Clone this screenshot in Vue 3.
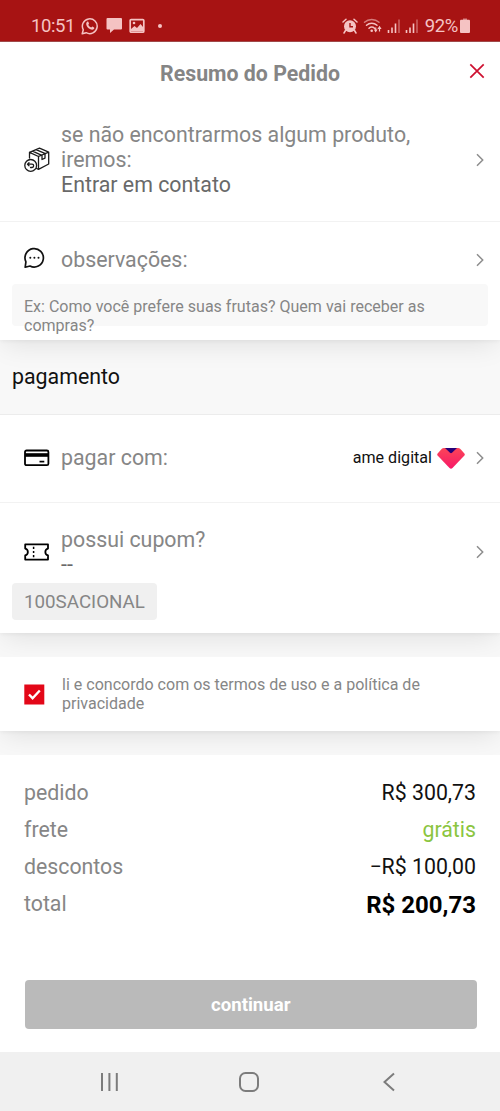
<script setup>
const totals = [
  { label: 'pedido', value: 'R$ 300,73', kind: 'plain' },
  { label: 'frete', value: 'grátis', kind: 'free' },
  { label: 'descontos', value: '−R$ 100,00', kind: 'discount' },
  { label: 'total', value: 'R$ 200,73', kind: 'grand' },
]
</script>

<template>
  <div class="screen">
    <div class="status">
      <span class="clock">10:51</span>
      <svg class="whats" width="18" height="18" viewBox="0 0 18 18">
        <path d="M1.2 16.8 2.3 12.8A7.4 7.4 0 1 1 5.2 15.7Z" fill="none" stroke="currentColor" stroke-width="1.5" stroke-linejoin="round" />
        <path d="M6.2 4.8c.5-.4 1-.3 1.2.2l.6 1.4c.1.4-.6 1-.7 1.3.6 1.3 1.6 2.2 2.9 2.8.4-.1.9-1 1.3-.9l1.5.8c.5.3.3 1.1-.1 1.6-1 1-2.4.8-4 0C7 11 5.7 9.4 5.3 7.7 5 6.5 5.5 5.3 6.2 4.8Z" fill="currentColor" />
      </svg>
      <svg class="bubble" width="17" height="17" viewBox="0 0 17 17">
        <path d="M1.5 1h13.500a1 1 0 0 1 1 1v9.500a1 1 0 0 1-1 1H8L4 16v-3.500H1.500a1 1 0 0 1-1-1V2a1 1 0 0 1 1-1Z" fill="currentColor" />
      </svg>
      <svg class="photo" width="16" height="16" viewBox="0 0 16 16">
        <rect x="1.2" y="1.6" width="13.6" height="12.6" rx="1" fill="none" stroke="currentColor" stroke-width="1.7" />
        <path d="M2 13V11l3.500-3 2.500 2 3.500-4L14 9v4Z" fill="currentColor" />
        <circle cx="5" cy="5" r="1.3" fill="currentColor" />
      </svg>
      <i class="dot"></i>
      <span class="grow"></span>
      <svg class="alarm" width="16" height="16" viewBox="0 0 16 16">
        <path d="M1 4 4 1.300M15 4 12 1.300M3.500 12.500 2 15M12.500 12.500 14 15" stroke="currentColor" stroke-width="1.5" stroke-linecap="round" />
        <circle cx="8" cy="8.2" r="6" fill="currentColor" />
        <path d="M8 5v3.700h3" fill="none" stroke="#a71313" stroke-width="1.4" />
      </svg>
      <svg class="wifi" width="20" height="16" viewBox="0 0 20 16">
        <g fill="none" stroke="currentColor" stroke-width="1.5" stroke-linecap="round">
          <path d="M1.500 4.200C5.500.6 12 .6 16 4.200" opacity=".6" />
          <path d="M3.500 7.200c3-2.700 7.500-2.700 10.500 0M6 10.200c1.700-1.500 3.900-1.500 5.500 0" />
        </g>
        <circle cx="8.7" cy="12.8" r="1.3" fill="currentColor" />
        <path d="m10.800 11.500 1.900 3 1.900-3ZM14.400 11l2.100-3.200 2.100 3.200Z" fill="currentColor" />
        <path d="M12.700 9.500v3M16.500 10v3.500" stroke="currentColor" stroke-width="1.2" />
      </svg>
      <svg v-for="n in 2" :key="n" class="signal" width="14" height="14" viewBox="0 0 14 14">
        <path d="M1.500 14v-3M5 14V8.500M8.500 14V4.500" stroke="currentColor" stroke-width="1.6" />
        <path d="M12 14V.500" stroke="currentColor" stroke-width="1.6" opacity=".45" />
      </svg>
      <span class="percent">92%</span>
      <svg class="battery" width="10" height="16" viewBox="0 0 10 16">
        <path d="M3 .500h4v1.500H3Z" fill="currentColor" opacity=".6" />
        <rect x="0" y="1.8" width="10" height="13.2" rx="1" fill="currentColor" />
      </svg>
    </div>

    <header class="title">
      <h1>Resumo do Pedido</h1>
      <svg class="close" width="16" height="16" viewBox="0 0 16 16"><path d="m1.300 1.300 13.400 13.400M14.700 1.300 1.300 14.700" stroke="#ce1030" stroke-width="1.7" /></svg>
    </header>

    <section class="card missing">
      <div class="icon">
        <svg width="26" height="26" viewBox="0 0 26 26" fill="none" stroke="#1b1b1b" stroke-width="1.3" stroke-linejoin="round" stroke-linecap="round">
          <path d="M5.500 11V5.300L15.500 1.200 24.700 5.100V17L14.500 22.300 12.500 21.500M5.500 5.300 14.500 9.500 24.700 5.100M14.500 9.500V22.300M8.500 4.200 17.900 8.400M12 2.700 21.400 6.700M18 8.200v4.300l3-1.400V6.700" />
          <circle cx="6.7" cy="18.4" r="5.9" fill="#fff" />
          <path d="M5 15.700 3.500 17.200 5 18.700M3.700 17.200H8c2.200 0 2.200 3.300 0 3.300H6.500" />
        </svg>
      </div>
      <p class="label">se não encontrarmos algum produto, iremos:<br><span class="choice">Entrar em contato</span></p>
      <svg class="chev" width="8" height="14" viewBox="0 0 8 14"><path d="m1 1.300 5.700 5.700L1 12.700" /></svg>
    </section>

    <section class="card notes">
      <div class="line">
        <div class="icon chat">
          <svg width="22" height="22" viewBox="0 0 22 22">
            <path d="M1.200 20.200 1.900 14.800A9.200 9.200 0 1 1 6 19Z" fill="none" stroke="#111" stroke-width="1.7" stroke-linejoin="round" />
            <g fill="#111"><circle cx="6.3" cy="10.8" r="1" /><circle cx="10.4" cy="10.8" r="1" /><circle cx="14.5" cy="10.8" r="1" /></g>
          </svg>
        </div>
        <p class="label">observações:</p>
        <svg class="chev" width="8" height="14" viewBox="0 0 8 14"><path d="m1 1.300 5.700 5.700L1 12.700" /></svg>
      </div>
      <div class="field">Ex: Como você prefere suas frutas? Quem vai receber as compras?</div>
    </section>

    <h2 class="heading">pagamento</h2>

    <section class="card pay">
      <div class="icon">
        <svg width="26" height="18" viewBox="0 0 26 18">
          <rect x="1" y="1.5" width="23.4" height="14.7" rx="1.5" fill="none" stroke="#000" stroke-width="1.8" />
          <path d="M1 4.200h23.400v3.600H1Z" />
          <path d="M15.500 12.600h4.800" stroke="#000" stroke-width="1.7" />
        </svg>
      </div>
      <p class="label">pagar com:</p>
      <span class="method">ame digital</span>
      <svg class="ame" width="28" height="22" viewBox="0 0 28 22">
        <defs><linearGradient id="pink" x1="0" y1="0" x2="0" y2="1"><stop offset="0" stop-color="#fb4558" /><stop offset="1" stop-color="#f71868" /></linearGradient></defs>
        <path d="M7 1h14q1.400 0 2.400 1l4 4.500q.8 1 0 2L15.500 21q-1.500 1.400-3 0L.600 8.500q-.8-1 0-2L4.600 2q1-1 2.400-1Z" fill="url(#pink)" />
        <path d="M8 1h12l-5 4.800q-1 .9-2 0Z" fill="#260078" />
      </svg>
      <svg class="chev" width="8" height="14" viewBox="0 0 8 14"><path d="m1 1.300 5.700 5.700L1 12.700" /></svg>
    </section>

    <section class="card coupon">
      <div class="line">
        <div class="icon">
          <svg width="26" height="18" viewBox="0 0 26 18" fill="none" stroke="#000" stroke-width="1.8" stroke-linejoin="round">
            <path d="M1.200 1.400h22.800v4.200a3.500 3.500 0 0 0 0 6.800v4.200H1.200v-4.200a3.500 3.500 0 0 0 0-6.800Z" />
            <path d="M9.600 3.800v2.200M9.600 7.900v2.200M9.600 12v2.200" stroke-width="1.5" />
          </svg>
        </div>
        <p class="label">possui cupom?<br><span class="choice">--</span></p>
        <svg class="chev" width="8" height="14" viewBox="0 0 8 14"><path d="m1 1.300 5.700 5.700L1 12.700" /></svg>
      </div>
      <span class="code">100SACIONAL</span>
    </section>

    <section class="card terms">
      <svg class="check" width="21" height="21" viewBox="0 0 21 21">
        <rect x=".3" y=".5" width="20" height="20" fill="#e30718" />
        <path d="m5 10.500 3.600 3.700 7.200-7.700" fill="none" stroke="#fff" stroke-width="2.4" />
      </svg>
      <p>li e concordo com os termos de uso e a política de privacidade</p>
    </section>

    <section class="summary">
      <div v-for="row in totals" :key="row.label" class="total-row">
        <span>{{ row.label }}</span>
        <span :class="['value', row.kind]">{{ row.value }}</span>
      </div>
      <button class="go">continuar</button>
    </section>

    <nav class="nav">
      <svg width="20" height="20" viewBox="0 0 20 20"><path d="M2 1v18M9.400 1v18M16.800 1v18" /></svg>
      <svg width="20" height="20" viewBox="0 0 20 20"><rect x="1" y="1" width="18" height="18" rx="5.5" /></svg>
      <svg width="20" height="20" viewBox="0 0 20 20"><path d="M16 1.500 6.500 10l9.500 8.500" /></svg>
    </nav>
  </div>
</template>

<style>
body { background: #fff; }
</style>

<style scoped>
.screen {
  width: 500px;
  height: 1111px;
  overflow: hidden;
  box-sizing: border-box;
  display: flex;
  flex-direction: column;
  background: #f8f8f8;
  color: #868686;
  font-family: Roboto, "Liberation Sans", sans-serif;
}
.screen > * { flex-shrink: 0; box-sizing: border-box; }
svg { display: block; flex: none; }
p, h1, h2 { margin: 0; }
.status {
  height: 42px;
  padding: 10px 30px 0 31px;
  display: flex;
  align-items: center;
  background: #a71313;
  color: #f5c3c3;
  font-size: 18.5px;
  border-bottom: 1px solid #a04a4a;
}
.clock { width: 50px; letter-spacing: -.4px; }
.bubble { margin-left: 7px; }
.photo { margin-left: 6px; }
.dot { width: 4px; height: 4px; border-radius: 50%; background: currentColor; margin-left: 13px; }
.grow { flex: 1; }
.wifi { margin-left: 5px; }
.signal { margin-left: 4px; }
.percent { margin-left: 6px; letter-spacing: -.4px; }
.battery { margin-left: 2px; }
.title {
  height: 62px;
  display: grid;
  grid-template-columns: 1fr auto 1fr;
  align-items: center;
  background: #fff;
}
.title h1 {
  grid-column: 2;
  font-size: 21.3px;
  line-height: 62px;
  padding-top: 1px;
  height: 62px;
  box-sizing: border-box;
  font-weight: 700;
  color: #858585;
}
.close { justify-self: end; margin: -4px 15px 0 0; }
.card { background: #fff; box-shadow: 0 8px 26px -4px rgba(0, 0, 0, .1), 0 1px 4px rgba(0, 0, 0, .05); }
.icon { width: 37px; flex: none; }
.chat { margin-top: -4px; }
.label { flex: 1; font-size: 21.35px; line-height: 25px; }
.choice { color: #696969; }
.chev { fill: none; stroke: #8d8d8d; stroke-width: 1.5; }
.missing {
  height: 118px;
  padding: 0 16px 6px 24px;
  display: flex;
  align-items: center;
  border-bottom: 1px solid #f2f2f2;
  box-shadow: none;
}
.line { display: flex; align-items: center; height: 25px; padding: 0 16px 0 24px; }
.coupon .line { height: 50px; }
.notes { height: 118px; padding-top: 25px; clip-path: inset(0 0 -40px); }
.field {
  height: 42px;
  margin: 12px 12px 0;
  padding: 14px 48px 0 12px;
  box-sizing: border-box;
  background: #f8f8f8;
  border-radius: 4px;
  font-size: 16.05px;
  line-height: 18.5px;
}
.heading {
  height: 74px;
  padding-left: 12px;
  line-height: 74px;
  font-size: 21.35px;
  font-weight: 400;
  color: #111;
}
.pay {
  height: 89px;
  padding: 0 16px 2px 24px;
  display: flex;
  align-items: center;
  border-top: 1px solid #ececec;
  border-bottom: 1px solid #f2f2f2;
  box-shadow: none;
}
.method { color: #111; font-size: 16.1px; }
.ame { margin: 0 11px 0 5px; }
.coupon { height: 130px; padding-top: 24px; clip-path: inset(0 0 -24px); }
.code {
  display: inline-block;
  box-sizing: border-box;
  margin: 6px 0 0 12px;
  padding: 1px 12px 0;
  height: 37px;
  line-height: 37px;
  font-size: 18.75px;
  border-radius: 4px;
  background: #f0f0f0;
}
.terms {
  height: 74px;
  margin-top: 24px;
  padding: 1px 60px 0 24px;
  display: flex;
  align-items: center;
  gap: 17px;
  font-size: 16.05px;
  line-height: 18.5px;
  clip-path: inset(0 0 -24px);
}
.summary { height: 297px; margin-top: 24px; padding: 18.5px 24px 0; background: #fff; }
.total-row { display: flex; justify-content: space-between; height: 37.3px; line-height: 37.3px; font-size: 21.3px; }
.value { color: #111; }
.free { color: #8bc53f; }
.grand { font-size: 24px; font-weight: 700; line-height: 40px; color: #000; }
.go {
  display: block;
  width: 452.5px;
  height: 49px;
  margin: 57.5px 0 0 .5px;
  border: 0;
  border-radius: 4px;
  background: #bababa;
  color: #fff;
  font: 700 18.6px Roboto, sans-serif;
}
.nav {
  height: 59px;
  padding: 0 102px 0 100px;
  display: flex;
  align-items: center;
  justify-content: space-between;
  background: #f0f0f0;
}
.nav svg { fill: none; stroke: #7c7c7c; stroke-width: 2; }
</style>
